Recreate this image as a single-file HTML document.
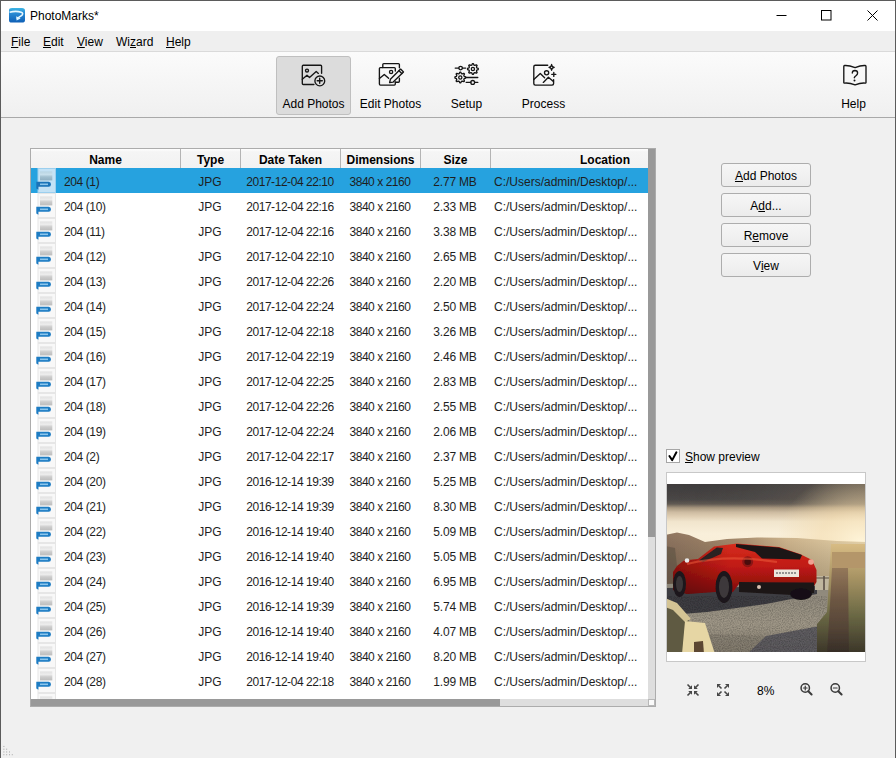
<!DOCTYPE html>
<html><head><meta charset="utf-8">
<style>
*{margin:0;padding:0;box-sizing:border-box}
html,body{width:896px;height:758px;overflow:hidden;background:#f0f0f0;font-family:"Liberation Sans",sans-serif;font-size:12px;color:#000}
.abs{position:absolute}
#win{position:absolute;left:0;top:0;width:896px;height:758px;background:#f0f0f0}
#bl{position:absolute;left:0;top:0;width:1px;height:758px;background:#5b5b5b}
#br{position:absolute;left:895px;top:0;width:1px;height:758px;background:#5b5b5b}
#bt{position:absolute;left:0;top:0;width:896px;height:1px;background:#5b5b5b}
#title{position:absolute;left:1px;top:1px;width:894px;height:30px;background:#fff}
#ttext{position:absolute;left:29px;top:8px;font-size:12px;color:#000}
#menu{position:absolute;left:1px;top:31px;width:894px;height:21px;background:#efefef;border-bottom:1px solid #dadada}
.mi{position:absolute;top:4px;font-size:12px}
#tool{position:absolute;left:1px;top:52px;width:894px;height:66px;background:linear-gradient(#fbfbfb,#f0f0f0);border-bottom:1px solid #a9a9a9}
.tb{position:absolute;top:4px;height:59px;text-align:center;border:1px solid transparent}
.tb.act{background:#dcdcdc;border:1px solid #bfbfbf;border-radius:3px}
.tl{position:absolute;left:0;right:0;top:40px;font-size:12px;text-align:center;color:#000}
.tb svg{position:absolute;top:8px}
#table{position:absolute;left:30px;top:148px;width:626px;height:559px;border:1px solid #acacac;background:#fff;overflow:hidden}
#hdr{position:absolute;left:0;top:0;width:617px;height:19px;background:linear-gradient(#fefefe 0,#f5f5f5 15%,#f2f2f2 100%)}
.hc{position:absolute;top:0;height:19px;font-weight:bold;font-size:12px;line-height:23px;text-align:center;border-right:1px solid #b4b4b4}
#body{position:absolute;left:0;top:19px;width:617px;height:531px;overflow:hidden}
.row{position:absolute;left:0;width:617px;height:25px}
.row.sel{background:#26a2df}
.c{position:absolute;top:7px;line-height:14px;white-space:nowrap;color:#1e1e1e}
.n{left:33px;letter-spacing:-0.4px}
.t{left:149px;width:60px;text-align:center}
.d{left:209px;width:100px;text-align:center;letter-spacing:-0.45px}
.m{left:309px;width:80px;text-align:center;letter-spacing:-0.45px}
.s{left:389px;width:70px;text-align:center;letter-spacing:-0.2px}
.l{left:463px}
.fi{position:absolute;left:5px;top:0px}
#vs{position:absolute;left:617px;top:0;width:7px;height:550px;background:#dedede}
#vth{position:absolute;left:617px;top:-1px;width:7px;height:389px;background:#999}
#hs{position:absolute;left:0;top:550px;width:617px;height:7px;background:#dedede}
#hth{position:absolute;left:0;top:550px;width:469px;height:7px;background:#999}
#corner{position:absolute;left:617px;top:550px;width:7px;height:7px;background:#fafafa;border:1px solid #b8b8b8}
.btn{position:absolute;left:721px;width:90px;height:24px;border:1px solid #adadad;border-radius:3px;background:linear-gradient(#f6f6f6,#ececec);text-align:center;line-height:24px;font-size:12px}
#chk{position:absolute;left:666px;top:449px;width:14px;height:14px;border:1px solid #a6a6a6;background:#fff}
#chkl{position:absolute;left:685px;top:450px;font-size:12px}
#prev{position:absolute;left:666px;top:472px;width:200px;height:190px;border:1px solid #c8c8c8;background:#fff}
#img{position:absolute;left:0px;top:11px;width:198px;height:168px}
#zoomtxt{position:absolute;left:757px;top:684px;font-size:12px}
</style></head><body><div id="win"><svg width="0" height="0" style="position:absolute"><defs><linearGradient id="th" x1="0" y1="0" x2="0" y2="1"><stop offset="0" stop-color="#e2e2e2"/><stop offset="0.35" stop-color="#ececec"/><stop offset="0.6" stop-color="#cdcdcd"/><stop offset="1" stop-color="#bdbdbd"/></linearGradient><linearGradient id="ths" x1="0" y1="0" x2="0" y2="1"><stop offset="0" stop-color="#b8d4e2"/><stop offset="0.35" stop-color="#c8e0ec"/><stop offset="0.6" stop-color="#a2c0d0"/><stop offset="1" stop-color="#90b0c2"/></linearGradient></defs></svg>
<div id="title">
  <svg class="abs" style="left:7px;top:5px" width="18" height="18" viewBox="0 0 18 18"><defs><linearGradient id="lg" x1="0" y1="0" x2="0" y2="1"><stop offset="0" stop-color="#3cb6e4"/><stop offset="0.3" stop-color="#2b8fd6"/><stop offset="1" stop-color="#0f5fb6"/></linearGradient></defs><path d="M1 4Q1 2 4 2H14Q17 2 17 4.5V14Q17 16.6 14 16.6H3.5Q1 16.6 1 14Z" fill="url(#lg)"/><path d="M1.6 6.2Q8 4.6 13.2 6.2Q15.8 7.2 13.8 9.4L8.8 12.6" fill="none" stroke="#e8f8ff" stroke-width="1.6"/><path d="M8.2 10.2L8.6 14.4L12.6 12.6Z" fill="#e0f6ff"/></svg>
  <div id="ttext">PhotoMarks*</div>
  <svg class="abs" style="left:770px;top:0" width="125" height="30"><path d="M5.5 14.5h10" stroke="#000" stroke-width="1"/><rect x="50.5" y="9.5" width="9.5" height="9.5" fill="none" stroke="#000"/><path d="M96.5 9.5L106.5 19.5M106.5 9.5L96.5 19.5" stroke="#000" stroke-width="1"/></svg>
</div>
<div id="menu">
  <span class="mi" style="left:10px"><u>F</u>ile</span>
  <span class="mi" style="left:42px"><u>E</u>dit</span>
  <span class="mi" style="left:76px"><u>V</u>iew</span>
  <span class="mi" style="left:115px">Wi<u>z</u>ard</span>
  <span class="mi" style="left:165px"><u>H</u>elp</span>
</div>
<div id="tool">
  <div class="tb act" style="left:275px;width:75px"><div class="tl">Add Photos</div></div>
  <div class="tb" style="left:352px;width:75px"><div class="tl">Edit Photos</div></div>
  <div class="tb" style="left:428px;width:75px"><div class="tl">Setup</div></div>
  <div class="tb" style="left:505px;width:75px"><div class="tl">Process</div></div>
  <div class="tb" style="left:815px;width:75px"><div class="tl">Help</div></div>
</div>

<svg class="abs" style="left:296px;top:58px" width="36" height="34" viewBox="0 0 36 34" fill="none" stroke="#151515" stroke-width="1.35" stroke-linecap="round" stroke-linejoin="round">
<path d="M25.6 15.2V8.2Q25.6 7.2 24.6 7.2H7.3Q6.3 7.2 6.3 8.2V25.5Q6.3 26.5 7.3 26.5H17.9"/>
<circle cx="11" cy="12.6" r="1.5"/>
<path d="M6.3 21.3L11 17.3L13.5 19.5L20.2 13.5L22.4 15.4"/>
<circle cx="23.8" cy="22.9" r="4.9"/>
<path d="M21.2 22.7H26.3M23.7 20.2V25.3"/>
</svg>
<svg class="abs" style="left:372px;top:58px" width="36" height="34" viewBox="0 0 36 34" fill="none" stroke="#151515" stroke-width="1.35" stroke-linecap="round" stroke-linejoin="round">
<path d="M23.3 13V10.6Q23.3 9.6 22.3 9.6H8.4Q7.4 9.6 7.4 10.6V26.1Q7.4 27.1 8.4 27.1H22.3Q23.3 27.1 23.3 26.1V24"/>
<path d="M10.8 9.6V6.6Q10.8 5.6 11.8 5.6H26.4Q27.4 5.6 27.4 6.6V9.8M27.4 20.2V23.2Q27.4 24.2 26.4 24.2H23.3"/>
<circle cx="19.1" cy="13.9" r="1.6"/>
<path d="M7.4 20.6L12.3 16.4L16.6 20.3"/>
<path d="M17.6 24.6L18.4 21.3L28.6 11.1L31.5 13.9L21.2 24.1Z"/>
<path d="M27 12.8L29.8 15.5" />
</svg>
<svg class="abs" style="left:448px;top:58px" width="36" height="34" viewBox="0 0 36 34" fill="none" stroke="#151515" stroke-width="1.3" stroke-linecap="round" stroke-linejoin="round">
<path d="M7.2 10.1H10.8M14.4 10.1H17.7"/>
<circle cx="12.6" cy="10.1" r="1.8"/>
<path d="M24.37 5.63 L25.43 5.63 L26.06 7.17 L26.79 7.47 L28.33 6.83 L29.07 7.57 L28.43 9.11 L28.73 9.84 L30.27 10.47 L30.27 11.53 L28.73 12.16 L28.43 12.89 L29.07 14.43 L28.33 15.17 L26.79 14.53 L26.06 14.83 L25.43 16.37 L24.37 16.37 L23.74 14.83 L23.01 14.53 L21.47 15.17 L20.73 14.43 L21.37 12.89 L21.07 12.16 L19.53 11.53 L19.53 10.47 L21.07 9.84 L21.37 9.11 L20.73 7.57 L21.47 6.83 L23.01 7.47 L23.74 7.17Z"/>
<circle cx="24.9" cy="11" r="1.6"/>
<path d="M11.77 14.13 L12.83 14.13 L13.46 15.67 L14.19 15.97 L15.73 15.33 L16.47 16.07 L15.83 17.61 L16.13 18.34 L17.67 18.97 L17.67 20.03 L16.13 20.66 L15.83 21.39 L16.47 22.93 L15.73 23.67 L14.19 23.03 L13.46 23.33 L12.83 24.87 L11.77 24.87 L11.14 23.33 L10.41 23.03 L8.87 23.67 L8.13 22.93 L8.77 21.39 L8.47 20.66 L6.93 20.03 L6.93 18.97 L8.47 18.34 L8.77 17.61 L8.13 16.07 L8.87 15.33 L10.41 15.97 L11.14 15.67Z"/>
<circle cx="12.3" cy="19.5" r="1.6"/>
<path d="M17.9 19.5H29.8M18.2 24.4H22.8M26.6 24.4H29.8"/>
<circle cx="24.7" cy="24.4" r="1.9"/>
</svg>
<svg class="abs" style="left:526px;top:58px" width="36" height="34" viewBox="0 0 36 34" fill="none" stroke="#151515" stroke-width="1.35" stroke-linecap="round" stroke-linejoin="round">
<path d="M21.7 7.2H9.3Q7.8 7.2 7.8 8.7V25.6Q7.8 27.1 9.3 27.1H26.1Q27.6 27.1 27.6 25.6V21.6"/>
<path d="M7.8 21.5L14.3 15.5L18.6 19.7"/>
<path d="M17.3 24.4L22.4 19.3L27.4 23.6"/>
<circle cx="20.6" cy="14.8" r="2.1"/>
<path d="M25.6 6.4Q25.9 9.1 28.3 9.4Q25.9 9.7 25.6 12.4Q25.3 9.7 22.9 9.4Q25.3 9.1 25.6 6.4Z" stroke-width="1.1"/>
<path d="M27.8 14.4V18.4M25.8 16.4H29.8"/>
</svg>
<svg class="abs" style="left:836px;top:58px" width="36" height="34" viewBox="0 0 36 34" fill="none" stroke="#151515" stroke-width="1.35" stroke-linecap="round" stroke-linejoin="round">
<path d="M8.6 7.5Q13 7.2 19.1 9.6Q25 7.2 29.2 7.5Q30 7.6 30 8.4V24.4Q30 25.2 29.2 25.1Q24.6 24.7 19.1 26.9Q13.6 24.7 8.6 25.1Q7.8 25.2 7.8 24.4V8.4Q7.8 7.6 8.6 7.5Z"/>
<path d="M16.3 15Q16.4 12.5 18.9 12.5Q21.6 12.6 21.6 15Q21.6 16.4 20.2 17.6Q18.6 18.9 18.3 19.8"/>
<circle cx="18.5" cy="22.5" r="0.45" fill="#151515" stroke-width="1.1"/>
</svg>
<div id="table">
  <div id="hdr">
    <div class="hc" style="left:0;width:150px">Name</div>
    <div class="hc" style="left:150px;width:60px">Type</div>
    <div class="hc" style="left:210px;width:100px">Date Taken</div>
    <div class="hc" style="left:310px;width:80px">Dimensions</div>
    <div class="hc" style="left:390px;width:70px">Size</div>
    <div class="hc" style="left:460px;width:157px;border-right:0;text-align:right;padding-right:18px">Location</div>
  </div>
  <div id="body">
<div class="row sel" style="top:0px"><svg class="fi" width="22" height="25" viewBox="0 0 22 25"><rect x="2" y="0.5" width="17.5" height="24" fill="#c4e2f5" stroke="#9ccfee" stroke-width="1"/><rect x="4" y="3.4" width="12.3" height="9" fill="url(#ths)"/><path d="M0.3 13.8H12.6Q15 13.8 15 16.3Q15 18.8 12.6 18.8H2.4V21.8L0.3 20.6Z" fill="#1a73b8"/><rect x="4" y="15.5" width="8" height="1.6" fill="#9fd4f4" opacity="0.85"/></svg><span class="c n">204 (1)</span><span class="c t">JPG</span><span class="c d">2017-12-04 22:10</span><span class="c m">3840 x 2160</span><span class="c s">2.77 MB</span><span class="c l">C:/Users/admin/Desktop/...</span></div>
<div class="row" style="top:25px"><svg class="fi" width="22" height="25" viewBox="0 0 22 25"><rect x="2" y="0.5" width="17.5" height="24" fill="#f8f8f8" stroke="#e6e6e6" stroke-width="1"/><rect x="4" y="3.4" width="12.3" height="9" fill="url(#th)"/><path d="M0.3 13.8H12.6Q15 13.8 15 16.3Q15 18.8 12.6 18.8H2.4V21.8L0.3 20.6Z" fill="#1d7cc3"/><rect x="4" y="15.5" width="8" height="1.6" fill="#9fd4f4" opacity="0.85"/></svg><span class="c n">204 (10)</span><span class="c t">JPG</span><span class="c d">2017-12-04 22:16</span><span class="c m">3840 x 2160</span><span class="c s">2.33 MB</span><span class="c l">C:/Users/admin/Desktop/...</span></div>
<div class="row" style="top:50px"><svg class="fi" width="22" height="25" viewBox="0 0 22 25"><rect x="2" y="0.5" width="17.5" height="24" fill="#f8f8f8" stroke="#e6e6e6" stroke-width="1"/><rect x="4" y="3.4" width="12.3" height="9" fill="url(#th)"/><path d="M0.3 13.8H12.6Q15 13.8 15 16.3Q15 18.8 12.6 18.8H2.4V21.8L0.3 20.6Z" fill="#1d7cc3"/><rect x="4" y="15.5" width="8" height="1.6" fill="#9fd4f4" opacity="0.85"/></svg><span class="c n">204 (11)</span><span class="c t">JPG</span><span class="c d">2017-12-04 22:16</span><span class="c m">3840 x 2160</span><span class="c s">3.38 MB</span><span class="c l">C:/Users/admin/Desktop/...</span></div>
<div class="row" style="top:75px"><svg class="fi" width="22" height="25" viewBox="0 0 22 25"><rect x="2" y="0.5" width="17.5" height="24" fill="#f8f8f8" stroke="#e6e6e6" stroke-width="1"/><rect x="4" y="3.4" width="12.3" height="9" fill="url(#th)"/><path d="M0.3 13.8H12.6Q15 13.8 15 16.3Q15 18.8 12.6 18.8H2.4V21.8L0.3 20.6Z" fill="#1d7cc3"/><rect x="4" y="15.5" width="8" height="1.6" fill="#9fd4f4" opacity="0.85"/></svg><span class="c n">204 (12)</span><span class="c t">JPG</span><span class="c d">2017-12-04 22:10</span><span class="c m">3840 x 2160</span><span class="c s">2.65 MB</span><span class="c l">C:/Users/admin/Desktop/...</span></div>
<div class="row" style="top:100px"><svg class="fi" width="22" height="25" viewBox="0 0 22 25"><rect x="2" y="0.5" width="17.5" height="24" fill="#f8f8f8" stroke="#e6e6e6" stroke-width="1"/><rect x="4" y="3.4" width="12.3" height="9" fill="url(#th)"/><path d="M0.3 13.8H12.6Q15 13.8 15 16.3Q15 18.8 12.6 18.8H2.4V21.8L0.3 20.6Z" fill="#1d7cc3"/><rect x="4" y="15.5" width="8" height="1.6" fill="#9fd4f4" opacity="0.85"/></svg><span class="c n">204 (13)</span><span class="c t">JPG</span><span class="c d">2017-12-04 22:26</span><span class="c m">3840 x 2160</span><span class="c s">2.20 MB</span><span class="c l">C:/Users/admin/Desktop/...</span></div>
<div class="row" style="top:125px"><svg class="fi" width="22" height="25" viewBox="0 0 22 25"><rect x="2" y="0.5" width="17.5" height="24" fill="#f8f8f8" stroke="#e6e6e6" stroke-width="1"/><rect x="4" y="3.4" width="12.3" height="9" fill="url(#th)"/><path d="M0.3 13.8H12.6Q15 13.8 15 16.3Q15 18.8 12.6 18.8H2.4V21.8L0.3 20.6Z" fill="#1d7cc3"/><rect x="4" y="15.5" width="8" height="1.6" fill="#9fd4f4" opacity="0.85"/></svg><span class="c n">204 (14)</span><span class="c t">JPG</span><span class="c d">2017-12-04 22:24</span><span class="c m">3840 x 2160</span><span class="c s">2.50 MB</span><span class="c l">C:/Users/admin/Desktop/...</span></div>
<div class="row" style="top:150px"><svg class="fi" width="22" height="25" viewBox="0 0 22 25"><rect x="2" y="0.5" width="17.5" height="24" fill="#f8f8f8" stroke="#e6e6e6" stroke-width="1"/><rect x="4" y="3.4" width="12.3" height="9" fill="url(#th)"/><path d="M0.3 13.8H12.6Q15 13.8 15 16.3Q15 18.8 12.6 18.8H2.4V21.8L0.3 20.6Z" fill="#1d7cc3"/><rect x="4" y="15.5" width="8" height="1.6" fill="#9fd4f4" opacity="0.85"/></svg><span class="c n">204 (15)</span><span class="c t">JPG</span><span class="c d">2017-12-04 22:18</span><span class="c m">3840 x 2160</span><span class="c s">3.26 MB</span><span class="c l">C:/Users/admin/Desktop/...</span></div>
<div class="row" style="top:175px"><svg class="fi" width="22" height="25" viewBox="0 0 22 25"><rect x="2" y="0.5" width="17.5" height="24" fill="#f8f8f8" stroke="#e6e6e6" stroke-width="1"/><rect x="4" y="3.4" width="12.3" height="9" fill="url(#th)"/><path d="M0.3 13.8H12.6Q15 13.8 15 16.3Q15 18.8 12.6 18.8H2.4V21.8L0.3 20.6Z" fill="#1d7cc3"/><rect x="4" y="15.5" width="8" height="1.6" fill="#9fd4f4" opacity="0.85"/></svg><span class="c n">204 (16)</span><span class="c t">JPG</span><span class="c d">2017-12-04 22:19</span><span class="c m">3840 x 2160</span><span class="c s">2.46 MB</span><span class="c l">C:/Users/admin/Desktop/...</span></div>
<div class="row" style="top:200px"><svg class="fi" width="22" height="25" viewBox="0 0 22 25"><rect x="2" y="0.5" width="17.5" height="24" fill="#f8f8f8" stroke="#e6e6e6" stroke-width="1"/><rect x="4" y="3.4" width="12.3" height="9" fill="url(#th)"/><path d="M0.3 13.8H12.6Q15 13.8 15 16.3Q15 18.8 12.6 18.8H2.4V21.8L0.3 20.6Z" fill="#1d7cc3"/><rect x="4" y="15.5" width="8" height="1.6" fill="#9fd4f4" opacity="0.85"/></svg><span class="c n">204 (17)</span><span class="c t">JPG</span><span class="c d">2017-12-04 22:25</span><span class="c m">3840 x 2160</span><span class="c s">2.83 MB</span><span class="c l">C:/Users/admin/Desktop/...</span></div>
<div class="row" style="top:225px"><svg class="fi" width="22" height="25" viewBox="0 0 22 25"><rect x="2" y="0.5" width="17.5" height="24" fill="#f8f8f8" stroke="#e6e6e6" stroke-width="1"/><rect x="4" y="3.4" width="12.3" height="9" fill="url(#th)"/><path d="M0.3 13.8H12.6Q15 13.8 15 16.3Q15 18.8 12.6 18.8H2.4V21.8L0.3 20.6Z" fill="#1d7cc3"/><rect x="4" y="15.5" width="8" height="1.6" fill="#9fd4f4" opacity="0.85"/></svg><span class="c n">204 (18)</span><span class="c t">JPG</span><span class="c d">2017-12-04 22:26</span><span class="c m">3840 x 2160</span><span class="c s">2.55 MB</span><span class="c l">C:/Users/admin/Desktop/...</span></div>
<div class="row" style="top:250px"><svg class="fi" width="22" height="25" viewBox="0 0 22 25"><rect x="2" y="0.5" width="17.5" height="24" fill="#f8f8f8" stroke="#e6e6e6" stroke-width="1"/><rect x="4" y="3.4" width="12.3" height="9" fill="url(#th)"/><path d="M0.3 13.8H12.6Q15 13.8 15 16.3Q15 18.8 12.6 18.8H2.4V21.8L0.3 20.6Z" fill="#1d7cc3"/><rect x="4" y="15.5" width="8" height="1.6" fill="#9fd4f4" opacity="0.85"/></svg><span class="c n">204 (19)</span><span class="c t">JPG</span><span class="c d">2017-12-04 22:24</span><span class="c m">3840 x 2160</span><span class="c s">2.06 MB</span><span class="c l">C:/Users/admin/Desktop/...</span></div>
<div class="row" style="top:275px"><svg class="fi" width="22" height="25" viewBox="0 0 22 25"><rect x="2" y="0.5" width="17.5" height="24" fill="#f8f8f8" stroke="#e6e6e6" stroke-width="1"/><rect x="4" y="3.4" width="12.3" height="9" fill="url(#th)"/><path d="M0.3 13.8H12.6Q15 13.8 15 16.3Q15 18.8 12.6 18.8H2.4V21.8L0.3 20.6Z" fill="#1d7cc3"/><rect x="4" y="15.5" width="8" height="1.6" fill="#9fd4f4" opacity="0.85"/></svg><span class="c n">204 (2)</span><span class="c t">JPG</span><span class="c d">2017-12-04 22:17</span><span class="c m">3840 x 2160</span><span class="c s">2.37 MB</span><span class="c l">C:/Users/admin/Desktop/...</span></div>
<div class="row" style="top:300px"><svg class="fi" width="22" height="25" viewBox="0 0 22 25"><rect x="2" y="0.5" width="17.5" height="24" fill="#f8f8f8" stroke="#e6e6e6" stroke-width="1"/><rect x="4" y="3.4" width="12.3" height="9" fill="url(#th)"/><path d="M0.3 13.8H12.6Q15 13.8 15 16.3Q15 18.8 12.6 18.8H2.4V21.8L0.3 20.6Z" fill="#1d7cc3"/><rect x="4" y="15.5" width="8" height="1.6" fill="#9fd4f4" opacity="0.85"/></svg><span class="c n">204 (20)</span><span class="c t">JPG</span><span class="c d">2016-12-14 19:39</span><span class="c m">3840 x 2160</span><span class="c s">5.25 MB</span><span class="c l">C:/Users/admin/Desktop/...</span></div>
<div class="row" style="top:325px"><svg class="fi" width="22" height="25" viewBox="0 0 22 25"><rect x="2" y="0.5" width="17.5" height="24" fill="#f8f8f8" stroke="#e6e6e6" stroke-width="1"/><rect x="4" y="3.4" width="12.3" height="9" fill="url(#th)"/><path d="M0.3 13.8H12.6Q15 13.8 15 16.3Q15 18.8 12.6 18.8H2.4V21.8L0.3 20.6Z" fill="#1d7cc3"/><rect x="4" y="15.5" width="8" height="1.6" fill="#9fd4f4" opacity="0.85"/></svg><span class="c n">204 (21)</span><span class="c t">JPG</span><span class="c d">2016-12-14 19:39</span><span class="c m">3840 x 2160</span><span class="c s">8.30 MB</span><span class="c l">C:/Users/admin/Desktop/...</span></div>
<div class="row" style="top:350px"><svg class="fi" width="22" height="25" viewBox="0 0 22 25"><rect x="2" y="0.5" width="17.5" height="24" fill="#f8f8f8" stroke="#e6e6e6" stroke-width="1"/><rect x="4" y="3.4" width="12.3" height="9" fill="url(#th)"/><path d="M0.3 13.8H12.6Q15 13.8 15 16.3Q15 18.8 12.6 18.8H2.4V21.8L0.3 20.6Z" fill="#1d7cc3"/><rect x="4" y="15.5" width="8" height="1.6" fill="#9fd4f4" opacity="0.85"/></svg><span class="c n">204 (22)</span><span class="c t">JPG</span><span class="c d">2016-12-14 19:40</span><span class="c m">3840 x 2160</span><span class="c s">5.09 MB</span><span class="c l">C:/Users/admin/Desktop/...</span></div>
<div class="row" style="top:375px"><svg class="fi" width="22" height="25" viewBox="0 0 22 25"><rect x="2" y="0.5" width="17.5" height="24" fill="#f8f8f8" stroke="#e6e6e6" stroke-width="1"/><rect x="4" y="3.4" width="12.3" height="9" fill="url(#th)"/><path d="M0.3 13.8H12.6Q15 13.8 15 16.3Q15 18.8 12.6 18.8H2.4V21.8L0.3 20.6Z" fill="#1d7cc3"/><rect x="4" y="15.5" width="8" height="1.6" fill="#9fd4f4" opacity="0.85"/></svg><span class="c n">204 (23)</span><span class="c t">JPG</span><span class="c d">2016-12-14 19:40</span><span class="c m">3840 x 2160</span><span class="c s">5.05 MB</span><span class="c l">C:/Users/admin/Desktop/...</span></div>
<div class="row" style="top:400px"><svg class="fi" width="22" height="25" viewBox="0 0 22 25"><rect x="2" y="0.5" width="17.5" height="24" fill="#f8f8f8" stroke="#e6e6e6" stroke-width="1"/><rect x="4" y="3.4" width="12.3" height="9" fill="url(#th)"/><path d="M0.3 13.8H12.6Q15 13.8 15 16.3Q15 18.8 12.6 18.8H2.4V21.8L0.3 20.6Z" fill="#1d7cc3"/><rect x="4" y="15.5" width="8" height="1.6" fill="#9fd4f4" opacity="0.85"/></svg><span class="c n">204 (24)</span><span class="c t">JPG</span><span class="c d">2016-12-14 19:40</span><span class="c m">3840 x 2160</span><span class="c s">6.95 MB</span><span class="c l">C:/Users/admin/Desktop/...</span></div>
<div class="row" style="top:425px"><svg class="fi" width="22" height="25" viewBox="0 0 22 25"><rect x="2" y="0.5" width="17.5" height="24" fill="#f8f8f8" stroke="#e6e6e6" stroke-width="1"/><rect x="4" y="3.4" width="12.3" height="9" fill="url(#th)"/><path d="M0.3 13.8H12.6Q15 13.8 15 16.3Q15 18.8 12.6 18.8H2.4V21.8L0.3 20.6Z" fill="#1d7cc3"/><rect x="4" y="15.5" width="8" height="1.6" fill="#9fd4f4" opacity="0.85"/></svg><span class="c n">204 (25)</span><span class="c t">JPG</span><span class="c d">2016-12-14 19:39</span><span class="c m">3840 x 2160</span><span class="c s">5.74 MB</span><span class="c l">C:/Users/admin/Desktop/...</span></div>
<div class="row" style="top:450px"><svg class="fi" width="22" height="25" viewBox="0 0 22 25"><rect x="2" y="0.5" width="17.5" height="24" fill="#f8f8f8" stroke="#e6e6e6" stroke-width="1"/><rect x="4" y="3.4" width="12.3" height="9" fill="url(#th)"/><path d="M0.3 13.8H12.6Q15 13.8 15 16.3Q15 18.8 12.6 18.8H2.4V21.8L0.3 20.6Z" fill="#1d7cc3"/><rect x="4" y="15.5" width="8" height="1.6" fill="#9fd4f4" opacity="0.85"/></svg><span class="c n">204 (26)</span><span class="c t">JPG</span><span class="c d">2016-12-14 19:40</span><span class="c m">3840 x 2160</span><span class="c s">4.07 MB</span><span class="c l">C:/Users/admin/Desktop/...</span></div>
<div class="row" style="top:475px"><svg class="fi" width="22" height="25" viewBox="0 0 22 25"><rect x="2" y="0.5" width="17.5" height="24" fill="#f8f8f8" stroke="#e6e6e6" stroke-width="1"/><rect x="4" y="3.4" width="12.3" height="9" fill="url(#th)"/><path d="M0.3 13.8H12.6Q15 13.8 15 16.3Q15 18.8 12.6 18.8H2.4V21.8L0.3 20.6Z" fill="#1d7cc3"/><rect x="4" y="15.5" width="8" height="1.6" fill="#9fd4f4" opacity="0.85"/></svg><span class="c n">204 (27)</span><span class="c t">JPG</span><span class="c d">2016-12-14 19:40</span><span class="c m">3840 x 2160</span><span class="c s">8.20 MB</span><span class="c l">C:/Users/admin/Desktop/...</span></div>
<div class="row" style="top:500px"><svg class="fi" width="22" height="25" viewBox="0 0 22 25"><rect x="2" y="0.5" width="17.5" height="24" fill="#f8f8f8" stroke="#e6e6e6" stroke-width="1"/><rect x="4" y="3.4" width="12.3" height="9" fill="url(#th)"/><path d="M0.3 13.8H12.6Q15 13.8 15 16.3Q15 18.8 12.6 18.8H2.4V21.8L0.3 20.6Z" fill="#1d7cc3"/><rect x="4" y="15.5" width="8" height="1.6" fill="#9fd4f4" opacity="0.85"/></svg><span class="c n">204 (28)</span><span class="c t">JPG</span><span class="c d">2017-12-04 22:18</span><span class="c m">3840 x 2160</span><span class="c s">1.99 MB</span><span class="c l">C:/Users/admin/Desktop/...</span></div>
<div class="row" style="top:525px"><svg class="fi" width="22" height="25" viewBox="0 0 22 25"><rect x="2" y="0.5" width="17.5" height="24" fill="#f8f8f8" stroke="#e6e6e6" stroke-width="1"/><rect x="4" y="3.4" width="12.3" height="9" fill="url(#th)"/><path d="M0.3 13.8H12.6Q15 13.8 15 16.3Q15 18.8 12.6 18.8H2.4V21.8L0.3 20.6Z" fill="#1d7cc3"/><rect x="4" y="15.5" width="8" height="1.6" fill="#9fd4f4" opacity="0.85"/></svg><span class="c n">204 (29)</span><span class="c t">JPG</span><span class="c d">2017-12-04 22:18</span><span class="c m">3840 x 2160</span><span class="c s">1.99 MB</span><span class="c l">C:/Users/admin/Desktop/...</span></div>
  </div>
  <div id="vs"></div><div id="vth"></div>
  <div id="hs"></div><div id="hth"></div>
  <div id="corner"></div>
</div>
<div class="btn" style="top:163px"><u>A</u>dd Photos</div>
<div class="btn" style="top:193px">A<u>d</u>d...</div>
<div class="btn" style="top:223px">R<u>e</u>move</div>
<div class="btn" style="top:253px">V<u>i</u>ew</div>
<div id="chk"></div><div id="chkl"><u>S</u>how preview</div>
<div id="prev"><svg id="img" width="198" height="168" viewBox="0 0 198 168">
<defs>
<linearGradient id="sky" x1="0" y1="0" x2="0" y2="1">
<stop offset="0" stop-color="#3e3c3d"/><stop offset="0.1" stop-color="#4a4746"/><stop offset="0.128" stop-color="#625b54"/>
<stop offset="0.15" stop-color="#a8977f"/><stop offset="0.175" stop-color="#cdbba1"/><stop offset="0.2" stop-color="#dfceb3"/>
<stop offset="0.23" stop-color="#f1e5cd"/><stop offset="0.3" stop-color="#f9efda"/><stop offset="1" stop-color="#f3e3c2"/>
</linearGradient>
<linearGradient id="skyR" x1="0" y1="0" x2="1" y2="0">
<stop offset="0" stop-color="#000" stop-opacity="0"/><stop offset="0.5" stop-color="#8a7a66" stop-opacity="0.1"/><stop offset="1" stop-color="#a89070" stop-opacity="0.35"/>
</linearGradient>
<radialGradient id="sun" cx="0.97" cy="0.36" r="0.42">
<stop offset="0" stop-color="#fff6dc" stop-opacity="1"/><stop offset="0.5" stop-color="#f4dcae" stop-opacity="0.55"/><stop offset="1" stop-color="#f0d8a8" stop-opacity="0"/>
</radialGradient>
<linearGradient id="mtn" x1="0" y1="0" x2="1" y2="0">
<stop offset="0" stop-color="#8f7560"/><stop offset="0.35" stop-color="#a88c6e"/><stop offset="0.6" stop-color="#d2b890"/><stop offset="1" stop-color="#efdcb2"/>
</linearGradient>
<linearGradient id="mtnV" x1="0" y1="0" x2="0" y2="1">
<stop offset="0" stop-color="#000" stop-opacity="0"/><stop offset="1" stop-color="#3a3020" stop-opacity="0.3"/>
</linearGradient>
<linearGradient id="red" x1="0" y1="0" x2="0" y2="1">
<stop offset="0" stop-color="#d62e1e"/><stop offset="0.45" stop-color="#c01a14"/><stop offset="1" stop-color="#7a0c0c"/>
</linearGradient>
<linearGradient id="redL" x1="0" y1="0" x2="1" y2="0">
<stop offset="0" stop-color="#300000" stop-opacity="0.35"/><stop offset="0.4" stop-color="#300000" stop-opacity="0"/>
</linearGradient>
<linearGradient id="pil" x1="0" y1="0" x2="0" y2="1">
<stop offset="0" stop-color="#94785a"/><stop offset="0.35" stop-color="#6e5844"/><stop offset="0.7" stop-color="#544436"/><stop offset="1" stop-color="#342c26"/>
</linearGradient>
<linearGradient id="grass" x1="0" y1="0" x2="0" y2="1">
<stop offset="0" stop-color="#d8bc84"/><stop offset="0.3" stop-color="#a89464"/><stop offset="0.65" stop-color="#6a6844"/><stop offset="1" stop-color="#3a3428"/>
</linearGradient>
<linearGradient id="road" x1="0" y1="0" x2="0" y2="1">
<stop offset="0" stop-color="#8a8478"/><stop offset="0.6" stop-color="#a09888"/><stop offset="1" stop-color="#847c6e"/>
</linearGradient>
<linearGradient id="vfade" x1="0" y1="0" x2="0" y2="1"><stop offset="0" stop-color="#fff"/><stop offset="0.45" stop-color="#fff"/><stop offset="0.8" stop-color="#000"/></linearGradient><mask id="mt"><rect x="-2" y="-2" width="202" height="40" fill="url(#vfade)"/></mask>
<filter id="bl" x="-5%" y="-5%" width="110%" height="110%"><feGaussianBlur stdDeviation="0.6"/></filter><filter id="nz" x="0" y="0" width="100%" height="100%"><feTurbulence type="fractalNoise" baseFrequency="0.9" numOctaves="2" seed="3"/><feColorMatrix values="0 0 0 0 0  0 0 0 0 0  0 0 0 0 0  0 0 0 -1.6 1.05"/></filter>
</defs>
<g filter="url(#bl)">
<rect x="-2" y="-2" width="202" height="172" fill="url(#sky)"/>
<rect x="-2" y="-2" width="202" height="40" fill="url(#skyR)" mask="url(#mt)"/>
<rect x="-2" y="-2" width="202" height="172" fill="url(#sun)"/>
<path d="M-2 51 L10 48.5 L22 51 L38 58 L60 55 L90 53.5 L130 54 L170 57 L200 58 L200 100 L-2 100Z" fill="url(#mtn)"/>
<path d="M-2 51 L10 48.5 L22 51 L38 58 L60 55 L90 53.5 L130 54 L170 57 L200 58 L200 100 L-2 100Z" fill="url(#mtnV)"/>
<path d="M-2 62 L8 64 L12 100 L-2 100Z" fill="#5a4e42" opacity="0.55"/>
<path d="M-2 100 L166 96 L166 170 L-2 170Z" fill="url(#road)"/>
<path d="M-2 104 L150 102 L150 110 L99 120 L40 128 L15 130 L-2 125Z" fill="#3e3d42"/>
<path d="M80 170 L99 152 L158 141 L158 170Z" fill="#55535a" opacity="0.85"/>
<path d="M40 150 L99 152 L80 170 L30 170Z" fill="#7a7468" opacity="0.45"/>
<rect x="0" y="112" width="160" height="56" filter="url(#nz)" opacity="0.28"/>
<path d="M148 92 L166 92 L166 106 L148 106Z" fill="#c0b69e"/>
<path d="M148 94 L166 94" stroke="#6a6050" stroke-width="1.2"/>
<path d="M157 92 L157 106" stroke="#5a5046" stroke-width="1.6"/>
<path d="M164 60 L200 60 L200 170 L150 170 L150 140 L160 128Z" fill="url(#grass)"/>
<path d="M165 84 L181 84 L182 170 L160 170 L163 120Z" fill="url(#pil)"/>
<path d="M165 68 L198 68 L198 84 L165 84Z" fill="#b4966a"/>
<path d="M0 116 L10 120 L22 134 L22 170 L-2 170Z" fill="#5f5a42"/>
<path d="M-2 114 L10 119 L24 135 L18 138 L6 126 L-2 123Z" fill="#d4c494"/>
<path d="M18 137 L38 139 L48 170 L15 170Z" fill="#e6d6a4"/>
<path d="M27 158 L36 157 L37 170 L27 170Z" fill="#5c4630"/>
<path d="M6 88 L10 82 L17 76.5 L31 75 L47 62.5 L70 59.5 L112 63 L133 70 L145 76 L149.5 86 L149.5 98 L147 102 L72 100 L66 108 L48 108 L20 110 L6 106Z" fill="url(#red)"/>
<path d="M6 88 L10 82 L17 76.5 L31 75 L47 62.5 L70 59.5 L112 63 L133 70 L145 76 L149.5 86 L149.5 98 L147 102 L72 100 L66 108 L48 108 L20 110 L6 106Z" fill="url(#redL)"/>
<path d="M69 60 L112 63.5 L135 71 L133 75.5 L95 74.5 L88 68 L69 63Z" fill="#1e1416"/>
<path d="M32 76.5 L49.8 63.4 L56 64 L54 70 L36 78Z" fill="#2a2022"/>
<path d="M72 98 L147 98.5 L147 109 L125 111 L72 108Z" fill="#1e1818"/>
<rect x="107" y="85.5" width="25" height="7.5" fill="#ece6dc"/>
<path d="M109 89 H130" stroke="#777" stroke-width="1.5" stroke-dasharray="2 1"/>
<ellipse cx="134" cy="110" rx="11" ry="6" fill="#141012"/>
<ellipse cx="57" cy="103" rx="8.5" ry="16" fill="#1c181a"/>
<ellipse cx="57" cy="103" rx="5" ry="11" fill="#3e393a"/>
<ellipse cx="12.5" cy="100" rx="6.5" ry="13" fill="#1c181a"/>
<ellipse cx="12.5" cy="100" rx="3.5" ry="8" fill="#3a3638"/>
<circle cx="80.7" cy="77.7" r="5.5" fill="#8a1412"/>
<circle cx="80.7" cy="77.7" r="3.2" fill="#4a0e10"/>
<circle cx="144" cy="78" r="2.8" fill="#f0a090"/>
<circle cx="20" cy="76.5" r="2.3" fill="#e8e8e8"/>
<path d="M20 80 Q60 70 110 78" stroke="#ec5a3c" stroke-width="2.2" fill="none" opacity="0.55"/>
<circle cx="92" cy="103" r="2" fill="#d8c0b0"/>
</g>
</svg>


</div>

<svg class="abs" style="left:666px;top:449px" width="14" height="14" viewBox="0 0 14 14"><path d="M3.4 7L6.2 11.1L10.4 3.3" fill="none" stroke="#000" stroke-width="2" stroke-linecap="round" stroke-linejoin="round"/></svg>
<svg class="abs" style="left:686px;top:683px" width="14" height="14" viewBox="0 0 14 14" fill="#474747" stroke="#474747">
<path d="M1.5 1.5L4.5 4.5M12.5 1.5L9.5 4.5M1.5 12.5L4.5 9.5M12.5 12.5L9.5 9.5" stroke-width="1.6"/>
<path d="M6 6V2.2L2.2 6ZM8 6V2.2L11.8 6ZM6 8V11.8L2.2 8ZM8 8V11.8L11.8 8Z" stroke="none"/>
</svg>
<svg class="abs" style="left:716px;top:683px" width="14" height="14" viewBox="0 0 14 14" fill="#474747" stroke="#474747">
<path d="M3 3L5.5 5.5M11 3L8.5 5.5M3 11L5.5 8.5M11 11L8.5 8.5" stroke-width="1.6"/>
<path d="M1 1H5L1 5ZM13 1H9L13 5ZM1 13H5L1 9ZM13 13H9L13 9Z" stroke="none"/>
</svg>
<svg class="abs" style="left:798px;top:681px" width="16" height="16" viewBox="0 0 16 16" fill="none" stroke="#3a3a3a" stroke-linecap="round">
<circle cx="7.25" cy="7" r="4.2" stroke-width="1.5"/><path d="M10.3 10.2L13.6 13.5" stroke-width="2"/><path d="M5.4 7H9.1M7.25 5.1V8.9" stroke-width="1.2"/>
</svg>
<svg class="abs" style="left:828px;top:681px" width="16" height="16" viewBox="0 0 16 16" fill="none" stroke="#3a3a3a" stroke-linecap="round">
<circle cx="7.25" cy="7" r="4.2" stroke-width="1.5"/><path d="M10.3 10.2L13.6 13.5" stroke-width="2"/><path d="M5.4 7H9.1" stroke-width="1.2"/>
</svg>
<svg class="abs" style="left:2px;top:745px" width="14" height="13" viewBox="0 0 14 14" fill="#9a9a9a">
<rect x="1" y="1" width="1" height="1"/><rect x="1" y="4" width="1" height="1"/><rect x="4" y="4" width="1" height="1"/><rect x="1" y="7" width="1" height="1"/><rect x="4" y="7" width="1" height="1"/><rect x="7" y="7" width="1" height="1"/><rect x="1" y="10" width="1" height="1"/><rect x="4" y="10" width="1" height="1"/><rect x="7" y="10" width="1" height="1"/><rect x="10" y="10" width="1" height="1"/>
</svg>
<div id="zoomtxt">8%</div>
</div>
<div id="bl"></div><div id="br"></div><div id="bt"></div>
</body></html>
